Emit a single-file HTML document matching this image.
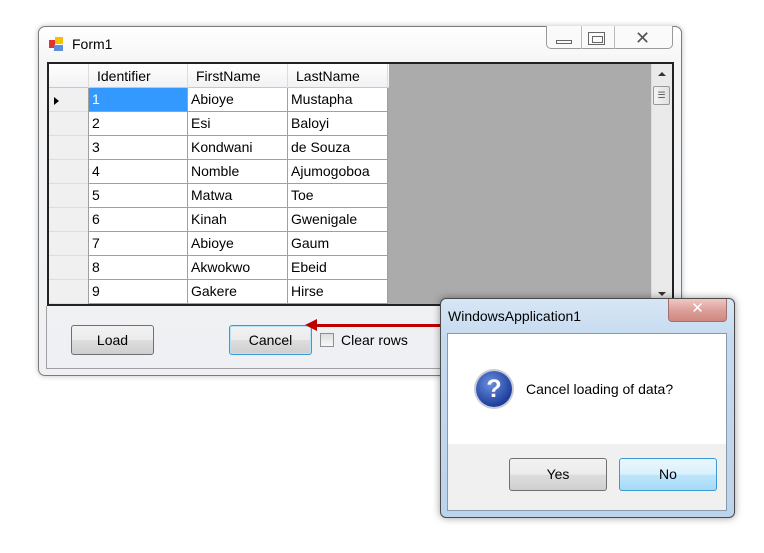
<html><head><style>
body{margin:0;width:764px;height:553px;background:#fff;font-family:"Liberation Sans",sans-serif;font-size:14px;position:relative;overflow:hidden}
.a{position:absolute}
.btn{position:absolute;border:1px solid #707070;border-radius:3px;background:linear-gradient(#f2f2f2 0,#ebebeb 50%,#dddddd 51%,#cfcfcf 100%);text-align:center;box-sizing:border-box;color:#000;font-size:14px}
.cell{position:absolute;box-sizing:border-box;border-right:1px solid #a0a0a0;border-bottom:1px solid #a0a0a0;height:24px;line-height:23px;padding-left:3px;background:#fff}
</style></head><body>
<div class="a" style="left:38px;top:26px;width:644px;height:350px;border:1px solid #7a7a7a;border-radius:7px;background:linear-gradient(#ffffff,#f4f4f4 40px,#eef0f3);box-shadow:0 0 6px rgba(0,0,0,.25);box-sizing:border-box"></div>
<div class="a" style="left:49px;top:37px;width:14px;height:14px">
<div class="a" style="left:0;top:3px;width:6px;height:8px;background:#d33"></div>
<div class="a" style="left:6px;top:0;width:8px;height:7px;background:#f5c000"></div>
<div class="a" style="left:5px;top:8px;width:9px;height:6px;background:#5b8fd6"></div></div>
<div class="a" style="left:72px;top:36px;font-size:14px">Form1</div>
<div class="a" style="left:546px;top:26px;width:127px;height:23px;border:1px solid #9a9a9a;border-top:none;border-radius:0 0 5px 5px;box-sizing:border-box;background:#fafafa"></div>
<div class="a" style="left:581px;top:26px;width:1px;height:23px;background:#bbb"></div>
<div class="a" style="left:614px;top:26px;width:1px;height:23px;background:#bbb"></div>
<div class="a" style="left:556px;top:40px;width:16px;height:4px;border:1px solid #666;box-sizing:border-box"></div>
<div class="a" style="left:588px;top:32px;width:17px;height:13px;border:1px solid #666;box-sizing:border-box"><div class="a" style="left:3px;top:3px;width:9px;height:5px;border:1px solid #666"></div></div>
<div class="a" style="left:635px;top:28px;font-size:18px;color:#555">✕</div>
<div class="a" style="left:47px;top:62px;width:627px;height:244px;border:2px solid #222;box-sizing:border-box;background:#ababab;overflow:hidden">
<div class="a" style="left:0;top:0;width:40px;height:240px;background:#f0f0f0"></div>
<div class="a" style="left:0;top:0;width:340px;height:24px;background:linear-gradient(#fff,#f1f2f4);border-bottom:1px solid #c8c8c8;box-sizing:border-box"></div>
<div class="a" style="left:39px;top:0;width:100px;height:24px;border-left:1px solid #ddd;border-right:1px solid #ddd;line-height:24px;padding-left:8px;box-sizing:border-box">Identifier</div>
<div class="a" style="left:139px;top:0;width:100px;height:24px;border-right:1px solid #ddd;line-height:24px;padding-left:8px;box-sizing:border-box">FirstName</div>
<div class="a" style="left:239px;top:0;width:100px;height:24px;border-right:1px solid #ddd;line-height:24px;padding-left:8px;box-sizing:border-box">LastName</div>
<div class="a" style="left:5px;top:33px;width:0;height:0;border-left:5px solid #000;border-top:4px solid transparent;border-bottom:4px solid transparent"></div>
<div class="a" style="left:602px;top:0;width:21px;height:240px;background:#eaeaea;border-left:1px solid #ddd"></div>
<div class="a" style="left:609px;top:8px;border-bottom:4px solid #333;border-left:4px solid transparent;border-right:4px solid transparent"></div>
<div class="a" style="left:604px;top:22px;width:17px;height:19px;border:1px solid #999;border-radius:2px;background:linear-gradient(90deg,#f4f4f4,#e0e0e0);box-sizing:border-box;font-size:9px;text-align:center;line-height:17px;color:#555">☰</div>
<div class="a" style="left:609px;top:228px;border-top:4px solid #333;border-left:4px solid transparent;border-right:4px solid transparent"></div>
<div id="rows"></div>
</div>
<div class="a" style="left:46px;top:306px;width:628px;height:63px;border:1px solid #a0a0a0;border-top:none;box-sizing:border-box"></div>
<div class="btn" style="left:71px;top:325px;width:83px;height:30px;line-height:28px">Load</div>
<div class="btn" style="left:229px;top:325px;width:83px;height:30px;line-height:28px;border-color:#3c9ad6;box-shadow:inset 0 0 0 1px #b8e2f8">Cancel</div>
<div class="a" style="left:320px;top:333px;width:14px;height:14px;border:1px solid #8e8f8f;background:linear-gradient(#ddd,#f8f8f8);box-sizing:border-box"></div>
<div class="a" style="left:341px;top:332px;font-size:14px">Clear rows</div>
<div class="a" style="left:312px;top:324px;width:130px;height:3px;background:#c00000"></div>
<div class="a" style="left:305px;top:319px;width:0;height:0;border-right:12px solid #c00000;border-top:6px solid transparent;border-bottom:6px solid transparent"></div>
<div class="a" style="left:440px;top:298px;width:295px;height:220px;border:1px solid #4a4a4a;border-radius:6px;background:linear-gradient(#d7e6f5,#c6daef 40px,#bcd3ec);box-shadow:0 0 8px rgba(0,0,0,.4);box-sizing:border-box"></div>
<div class="a" style="left:448px;top:308px;font-size:14px">WindowsApplication1</div>
<div class="a" style="left:668px;top:299px;width:59px;height:23px;border:1px solid #a07070;border-top:none;border-radius:0 0 4px 4px;background:linear-gradient(#f0c8c4,#dca09a 50%,#d08880);box-sizing:border-box;text-align:center;color:#fff;font-size:15px;line-height:20px">✕</div>
<div class="a" style="left:447px;top:333px;width:280px;height:178px;border:1px solid #8a99a8;background:#f0f0f0;box-sizing:border-box"><div class="a" style="left:0;top:0;width:278px;height:110px;background:#fff"></div></div>
<div class="a" style="left:476px;top:371px;width:36px;height:36px;border-radius:50%;background:radial-gradient(circle at 40% 35%,#6a90e0,#1f3f9c 70%);box-shadow:0 0 0 2px #c8ccd4;color:#fff;font-weight:bold;font-size:25px;text-align:center;line-height:36px">?</div>
<div class="a" style="left:526px;top:381px;font-size:14px">Cancel loading of data?</div>
<div class="btn" style="left:509px;top:458px;width:98px;height:33px;line-height:31px">Yes</div>
<div class="btn" style="left:619px;top:458px;width:98px;height:33px;line-height:31px;border-color:#3c9ad6;background:linear-gradient(#eaf6fd,#d9f0fc 50%,#bee6fd 51%,#a7d9f5)">No</div>
<script>
var d=[["1","Abioye","Mustapha"],["2","Esi","Baloyi"],["3","Kondwani","de Souza"],["4","Nomble","Ajumogoboa"],["5","Matwa","Toe"],["6","Kinah","Gwenigale"],["7","Abioye","Gaum"],["8","Akwokwo","Ebeid"],["9","Gakere","Hirse"]];
var h="";d.forEach(function(r,i){var t=24+i*24;
h+='<div class="a" style="left:0;top:'+t+'px;width:40px;height:24px;border-bottom:1px solid #ddd;border-right:1px solid #a0a0a0;box-sizing:border-box"></div>';
h+='<div class="cell" style="left:39px;top:'+t+'px;width:100px;border-left:1px solid #a0a0a0;'+(i==0?'background:#3399ff;color:#fff':'')+'">'+r[0]+'</div>';
h+='<div class="cell" style="left:139px;top:'+t+'px;width:100px">'+r[1]+'</div>';
h+='<div class="cell" style="left:239px;top:'+t+'px;width:100px">'+r[2]+'</div>';});
document.getElementById("rows").innerHTML=h;
</script>
</body></html>
